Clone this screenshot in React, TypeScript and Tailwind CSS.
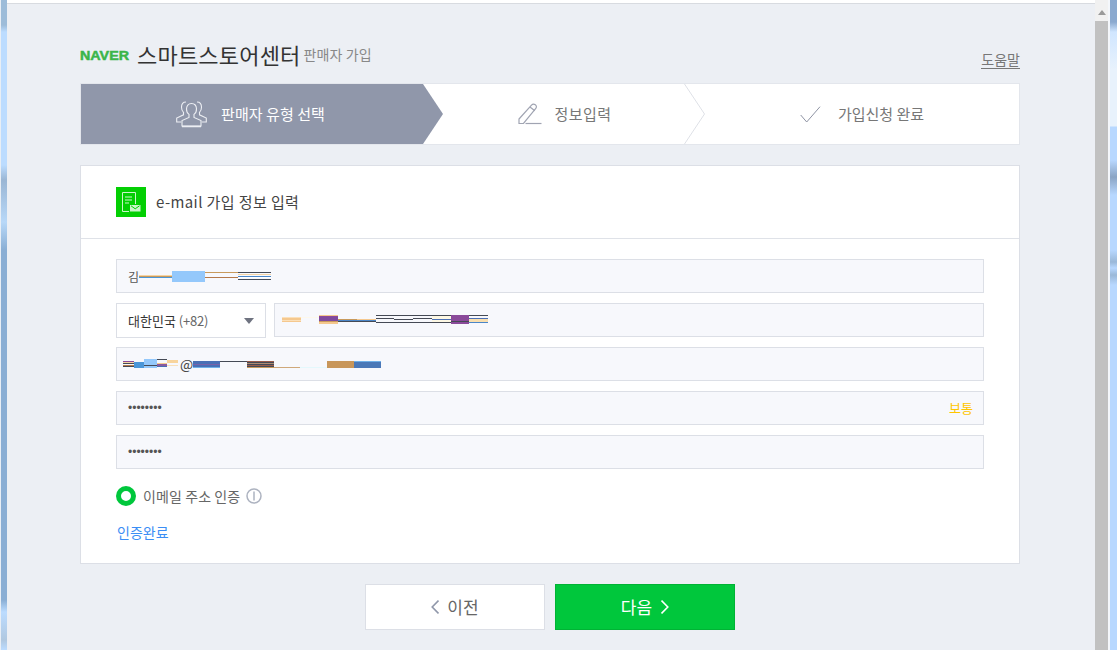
import React from 'react';

const fontStack = "font-['Noto_Sans_CJK_KR','Noto_Sans',sans-serif]";

type Segment = { width: string; bars: string[] };

// scrambled (redacted) text, drawn as flat colour bars
const nameBars: Segment[] = [
  { width: 'w-[33px]', bars: ['h-[4px]', 'h-px bg-[#f5d3a3]', 'h-px bg-[#c89a5c]', 'h-px bg-[#4a96d8]'] },
  { width: 'w-[33px]', bars: ['h-[11px] bg-[#94c8fb]'] },
  { width: 'w-[33px]', bars: ['h-px', 'h-px bg-[#c89a5c]', 'h-[4px]', 'h-px bg-[#b5794a]'] },
  { width: 'w-[33px]', bars: ['h-px', 'h-px bg-[#454a55]', 'h-px', 'h-px bg-[#f5d3a3]', 'h-px', 'h-px bg-[#4a86c8]', 'h-px bg-white', 'h-px', 'h-px bg-[#454a55]'] },
];

const phoneBars: Segment[] = [
  { width: 'w-[19px]', bars: ['h-[2px]', 'h-px bg-[#fbe0ba]', 'h-[2px] bg-[#f5c88e]', 'h-px bg-[#fbe0ba]', 'h-[1px] bg-[#f5c88e]'] },
  { width: 'w-[18px]', bars: ['h-[2px]', 'h-px bg-[#fdf8ec]'] },
  { width: 'w-[19px]', bars: ['h-px bg-[#f5c88e]', 'h-px bg-[#8a4a9a]', 'h-[4px] bg-[#7e4a9e]', 'h-px bg-[#c89a5c]', 'h-[2px] bg-[#f5c88e]'] },
  { width: 'w-[19px]', bars: ['h-[4px]', 'h-px bg-[#c89a5c]', 'h-px bg-[#4a86c8]', 'h-px bg-[#454a55]'] },
  { width: 'w-[19px]', bars: ['h-[4px]', 'h-px bg-[#f5c88e]', 'h-px bg-[#4a86c8]', 'h-px bg-[#454a55]'] },
  { width: 'w-[18px]', bars: ['h-px bg-[#454a55]', 'h-[2px]', 'h-px bg-[#454a55]', 'h-[3px]', 'h-px bg-[#454a55]'] },
  { width: 'w-[19px]', bars: ['h-px bg-[#454a55]', 'h-[3px]', 'h-px bg-[#454a55]', 'h-[2px]', 'h-px bg-[#454a55]'] },
  { width: 'w-[19px]', bars: ['h-px bg-[#454a55]', 'h-[2px]', 'h-px bg-[#454a55]', 'h-[3px]', 'h-px bg-[#454a55]'] },
  { width: 'w-[19px]', bars: ['h-px bg-[#454a55]', 'h-[3px] bg-[#fdf8e4]', 'h-px bg-[#4a6fb5]', 'h-[2px] bg-[#fdf8e4]', 'h-px bg-[#454a55]'] },
  { width: 'w-[18px]', bars: ['h-[6px] bg-[#8a4a9a]', 'h-px bg-[#454a55]', 'h-[2px] bg-[#8a4a9a]'] },
  { width: 'w-[19px]', bars: ['h-px bg-[#454a55]', 'h-[2px]', 'h-px bg-[#4a6fb5]', 'h-[3px] bg-[#f8dfb0]', 'h-px bg-[#4a86c8]'] },
];

const emailBarsLeft: Segment[] = [
  { width: 'w-[11px]', bars: ['h-[2px]', 'h-px bg-[#8a4a9a]', 'h-px bg-[#f5d3a3]', 'h-px bg-[#454a55]', 'h-px', 'h-px bg-[#b5794a]', 'h-px bg-[#454a55]'] },
  { width: 'w-[10px]', bars: ['h-[3px]', 'h-[6px] bg-[#4a96d8]'] },
  { width: 'w-[13px]', bars: ['h-[6px] bg-[#94c8fb]', 'h-px bg-[#454a55]', 'h-[2px] bg-[#94c8fb]'] },
  { width: 'w-[10px]', bars: ['h-px bg-[#454a55]', 'h-[3px]', 'h-px bg-[#f5c88e]', 'h-[2px] bg-[#8a5aa0]', 'h-px bg-[#4a6fb5]'] },
  { width: 'w-[11px]', bars: ['h-px', 'h-[3px] bg-[#f8d49c]', 'h-[2px]', 'h-px bg-[#f8e0bb]'] },
];

const emailBarsRight: Segment[] = [
  { width: 'w-[27px]', bars: ['h-[2px]', 'h-[3px] bg-[#4a6fb5]', 'h-px bg-[#7a62a8]', 'h-[2px] bg-[#4a6fb5]', 'h-px bg-[#6fb0e8]'] },
  { width: 'w-[27px]', bars: ['h-[2px]', 'h-px bg-[#454a55]'] },
  { width: 'w-[27px]', bars: ['h-[2px]', 'h-px bg-[#9a5a4a]', 'h-px bg-[#454a55]', 'h-px bg-[#b08a70]', 'h-px bg-[#454a55]', 'h-px bg-[#9a5a4a]', 'h-px bg-[#454a55]', 'h-px bg-[#c89a5c]'] },
  { width: 'w-[26px]', bars: ['h-[8px]', 'h-px bg-[#cfa87a]'] },
  { width: 'w-[27px]', bars: ['h-[8px]', 'h-px bg-[#e4f8fc]'] },
  { width: 'w-[27px]', bars: ['h-[2px]', 'h-[7px] bg-[#c8965a]'] },
  { width: 'w-[27px]', bars: ['h-[2px]', 'h-px bg-[#6fb0e8]', 'h-[6px] bg-[#4a78b8]'] },
];

function Stripes({ segments, className = 'mt-px' }: { segments: Segment[]; className?: string }) {
  return (
    <div className={`flex items-start h-[12px] shrink-0 ${className}`}>
      {segments.map((segment, i) => (
        <div key={i} className={`${segment.width} flex flex-col`}>
          {segment.bars.map((bar, j) => (
            <div key={j} className={bar} />
          ))}
        </div>
      ))}
    </div>
  );
}

function UsersIcon() {
  return (
    <svg width="31" height="27" viewBox="0 0 31 27" fill="none" stroke="#eceef3" strokeWidth="1.100">
      <path d="M10 1C7 1 5.500 3.300 5.500 6.300c0 2.200.8 4 2 5v2.500L.7 17v4h4.500" />
      <path d="M21 1c3 0 4.500 2.300 4.500 5.300 0 2.200-.8 4-2 5v2.500l6.800 3.200v4h-4.500" />
      <path d="M15.500 2.500c-3.200 0-5 2.400-5 5.500 0 2.500 1 4.400 2.500 5.400v3L6 19.500V25h19v-5.500l-7-3.100v-3c1.500-1 2.500-2.900 2.500-5.400 0-3.100-1.800-5.500-5-5.500z" fill="#9097aa" />
      <path d="M6 25.500h19" strokeWidth="1.600" />
    </svg>
  );
}

function PencilIcon() {
  return (
    <svg width="24" height="22" viewBox="0 0 24 22" fill="none" stroke="#a0a4b2" strokeWidth="1.200">
      <path d="M1 16 13.500 2.200c1-1.100 2.500-1.300 3.800-.4 1.300.9 1.400 2.500.5 3.600L5.500 20.500H1z" />
      <path d="m12 4 4.800 3.800" />
      <path d="M7.500 20.500h16" />
    </svg>
  );
}

function CheckIcon() {
  return (
    <svg width="21" height="17" viewBox="0 0 21 17" fill="none" stroke="#8e93a3" strokeWidth="1">
      <path d="m.7 9 6 7L20 .7" />
    </svg>
  );
}

function MailFormIcon() {
  return (
    <div className="w-[30px] h-[30px] bg-[#03cf03] flex items-center justify-center shrink-0">
      <svg width="20" height="20" viewBox="0 0 20 20" fill="none" stroke="#c9f5c9" strokeWidth="1">
        <path d="M8 19.500H1.500V.5h13V12" />
        <path d="M4 5h7M4 8h7M4 11h4" strokeWidth="1.200" />
        <rect x="9" y="13" width="10.500" height="6.500" fill="#c9f5c9" stroke="none" />
        <path d="m10 13.800 4.200 3 4.300-3" stroke="#03cf03" />
      </svg>
    </div>
  );
}

function Field({ children, className = '' }: { children: React.ReactNode; className?: string }) {
  return (
    <div className={`h-[34px] border border-[#dcdfe6] bg-[#f7f8fc] flex items-center text-[13px] text-[#555] ${className}`}>
      {children}
    </div>
  );
}

export default function App() {
  return (
    <div className={`${fontStack} w-[1117px] h-[650px] overflow-hidden flex bg-white`}>
      <div className="w-px bg-[#e8eef5]" />
      <div className="w-[6px] bg-[linear-gradient(180deg,#9dbcd9_0,#9dbcd9_25px,#bcdcff_32px,#bcdcff_165px,#9ab6d4_180px,#b8d8f8_222px,#8aaed4_250px,#8aaed4_600px,#bcdcff_612px,#b0c8e0_640px,#bcdcff_650px)]" />

      <div className="w-[1088px] flex flex-col">
        <div className="h-[3px] bg-white shrink-0" />
        <div className="flex-1 border-t border-[#d8dbe0] bg-[#eceff4] pl-[73px] pr-[75px] pt-[37px]">
          <div className="h-[42px] flex items-start">
            <span className="font-['Liberation_Sans',sans-serif] font-black text-[#3bb54a] text-[13px] leading-[22px] mt-[4px] scale-x-[1.1] origin-left w-[57px] [-webkit-text-stroke:0.5px_#3bb54a]">
              NAVER
            </span>
            <span className="text-[22px] leading-[26px] text-[#333] tracking-[0.2px]">스마트스토어센터</span>
            <span className="text-[14px] leading-[26px] text-[#888] ml-[3px] tracking-[0.1px]">판매자 가입</span>
            <a className="ml-auto mt-[10px] text-[14px] leading-[17px] text-[#777] border-b border-[#777]">도움말</a>
          </div>

          <div className="h-[62px] border border-[#e3e6ec] bg-white flex">
            <div className="w-[362px] bg-[#9097aa] [clip-path:polygon(0_0,342px_0,100%_50%,342px_100%,0_100%)] flex items-center justify-center gap-[14px] pr-[23px] text-white text-[15px] tracking-[0.05px]">
              <UsersIcon />
              <span>판매자 유형 선택</span>
            </div>
            <div className="w-[262px] relative flex items-center justify-center gap-[12px] pr-[18px] text-[15px] text-[#777]">
              <PencilIcon />
              <span className="tracking-[0.5px]">정보입력</span>
              <svg className="absolute right-0 top-0" width="21" height="60" viewBox="0 0 21 60" fill="none" stroke="#dfe1e7">
                <path d="m.5 0 20 30-20 30" />
              </svg>
            </div>
            <div className="flex-1 flex items-center justify-center gap-[17px] text-[15px] text-[#777]">
              <CheckIcon />
              <span>가입신청 완료</span>
            </div>
          </div>

          <div className="mt-[20px] h-[399px] border border-[#dcdfe6] bg-white">
            <div className="h-[73px] border-b border-[#dfe2e8] pl-[35px] flex items-center gap-[10px]">
              <MailFormIcon />
              <span className="text-[15px] text-[#444] tracking-[0.4px]">e-mail 가입 정보 입력</span>
            </div>

            <div className="px-[35px] pt-[20px] flex flex-col gap-[10px]">
              <Field className="pl-[11px]">
                <span className="w-[11px] mt-[2px] text-[12px]">김</span>
                <Stripes segments={nameBars} className="mt-[2px]" />
              </Field>

              <div className="flex gap-[8px]">
                <div className="w-[150px] h-[35px] border border-[#dcdfe6] bg-white flex items-center justify-between pl-[11px] pr-[11px] text-[13px] text-[#333]">
                  <span>대한민국 <span className="text-[#666] tracking-[-0.2px]">(+82)</span></span>
                  <div className="w-0 h-0 border-x-[5px] border-x-transparent border-t-[6px] border-t-[#6f7380]" />
                </div>
                <Field className="flex-1 pl-[7px]">
                  <Stripes segments={phoneBars} />
                </Field>
              </div>

              <Field className="pl-[6px] -mt-px">
                <Stripes segments={emailBarsLeft} />
                <span className="ml-[2px] w-[13px] text-[14px] text-[#444]">@</span>
                <Stripes segments={emailBarsRight} />
              </Field>

              <Field className="pl-[11px] justify-between pr-[10px]">
                <span className="font-['Liberation_Sans',sans-serif] text-[12px] text-[#555]">••••••••</span>
                <span className="text-[#ffc600]">보통</span>
              </Field>

              <Field className="pl-[11px]">
                <span className="font-['Liberation_Sans',sans-serif] text-[12px] text-[#555]">••••••••</span>
              </Field>
            </div>

            <div className="pl-[35px] mt-[17px] flex items-center h-[20px]">
              <div className="w-[20px] h-[20px] rounded-full border-[5px] border-[#00c73c] bg-white" />
              <span className="ml-[7px] text-[14px] text-[#666] tracking-[0.1px]">이메일 주소 인증</span>
              <svg className="ml-[6px]" width="16" height="16" viewBox="0 0 16 16" fill="none" stroke="#adb3c0">
                <circle cx="8" cy="8" r="7" strokeWidth="1.500" />
                <path d="M8 3.500v9" strokeWidth="1.500" />
              </svg>
            </div>

            <div className="pl-[36px] mt-[16px] text-[14px] leading-[20px] text-[#3b8ef5]">인증완료</div>
          </div>

          <div className="mt-[20px] flex justify-center gap-[10px]">
            <div className="w-[180px] h-[46px] border border-[#dcdfe6] bg-white flex items-center justify-center gap-[8px] text-[17px] text-[#666]">
              <svg width="8" height="14" viewBox="0 0 8 14" fill="none" stroke="#9097aa" strokeWidth="1.600">
                <path d="M7.500.6 1.200 7l6.300 6.400" />
              </svg>
              <span>이전</span>
            </div>
            <div className="w-[180px] h-[46px] border border-[#00b335] bg-[#00c73c] flex items-center justify-center gap-[9px] text-[17px] text-white">
              <span>다음</span>
              <svg width="8" height="14" viewBox="0 0 8 14" fill="none" stroke="#fff" strokeWidth="1.600">
                <path d="M.5.6 6.800 7 .5 13.400" />
              </svg>
            </div>
          </div>
        </div>
      </div>

      <div className="w-[13px] flex flex-col bg-[#c1c1c1]">
        <div className="h-[21px] bg-[#f1f1f1] flex justify-center pt-[10px] shrink-0">
          <div className="w-0 h-0 border-x-[4px] border-x-transparent border-b-[5px] border-b-[#9a9a9a]" />
        </div>
      </div>
      <div className="w-[2px] bg-[#f4f7fb]" />
      <div className="w-[7px] bg-[linear-gradient(180deg,#8aa9cf_0,#8aa9cf_22px,#d0e6ff_32px,#e8f2fc_70px,#e8f2fc_126px,#b8d8ff_127px,#b8d8ff_160px,#8aa4c4_177px,#b8d8ff_195px,#b8d8ff_250px,#9ab8d8_262px,#b8d8ff_268px,#9ab8d8_275px,#b8d8ff_285px,#b8d8ff_650px)]" />
    </div>
  );
}
